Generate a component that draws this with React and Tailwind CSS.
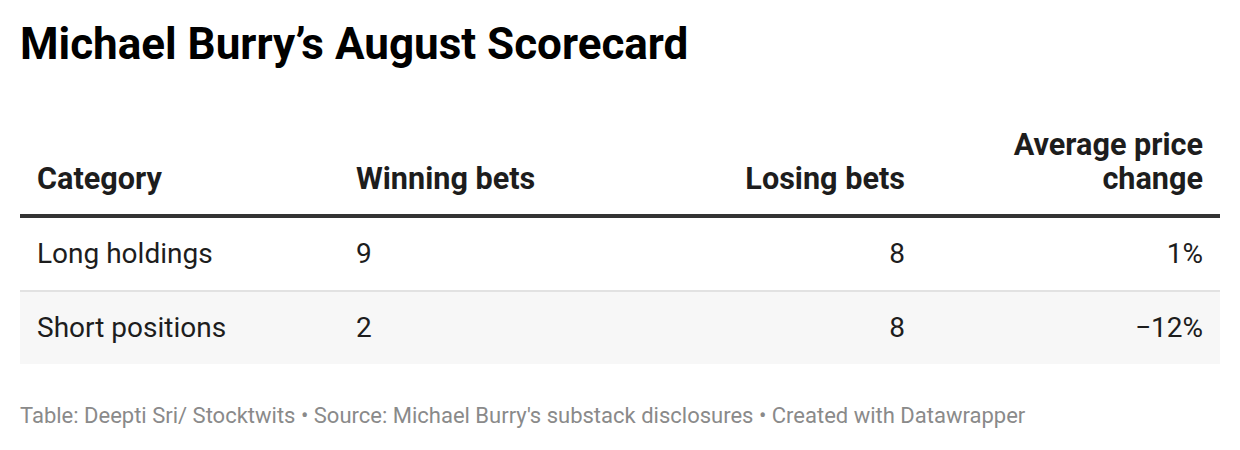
import React from 'react';

const rows = [
    { category: 'Long holdings', winning: '9', losing: '8', change: '1%', shaded: false },
    { category: 'Short positions', winning: '2', losing: '8', change: '\u221212%', shaded: true },
];

const App = () => {
    return (
        <div className="min-h-[450px] bg-white px-5 pt-5 font-['Roboto',sans-serif]">
            <h1 className="text-[44px] leading-[48px] font-bold text-black">Michael Burry’s August Scorecard</h1>

            <table className="mt-[42px] w-full border-collapse text-[28px] leading-[34px]">
                <colgroup>
                    <col className="w-[319px]" />
                    <col />
                    <col />
                    <col className="w-[298px]" />
                </colgroup>
                <thead>
                    <tr className="border-b-4 border-[#333333] text-[30.6px] text-[#1d1d1d]">
                        <th className="px-[17px] pt-[18px] pb-[18px] text-left align-bottom font-bold">Category</th>
                        <th className="px-[17px] pt-[18px] pb-[18px] text-left align-bottom font-bold">Winning bets</th>
                        <th className="px-[17px] pt-[18px] pb-[18px] text-right align-bottom font-bold">Losing bets</th>
                        <th className="px-[17px] pt-[18px] pb-[18px] text-right align-bottom font-bold">Average price<br />change</th>
                    </tr>
                </thead>
                <tbody className="text-[#1d1d1d]">
                    {rows.map((row, i) => (
                        <tr
                            key={row.category}
                            className={`${row.shaded ? 'bg-[#f7f7f7]' : 'bg-white'} ${i === 0 ? 'border-b-2 border-[#e2e2e2]' : ''}`}
                        >
                            <td className="px-[17px] py-[19px] text-left">{row.category}</td>
                            <td className="px-[17px] py-[19px] text-left">{row.winning}</td>
                            <td className="px-[17px] py-[19px] text-right">{row.losing}</td>
                            <td className="px-[17px] py-[19px] text-right">{row.change}</td>
                        </tr>
                    ))}
                </tbody>
            </table>

            <p className="mt-10 text-[22px] leading-6 text-[#8a8a8a]">
                Table: Deepti Sri/ Stocktwits • Source: Michael Burry's substack disclosures • Created with Datawrapper
            </p>
        </div>
    );
};

export default App;
